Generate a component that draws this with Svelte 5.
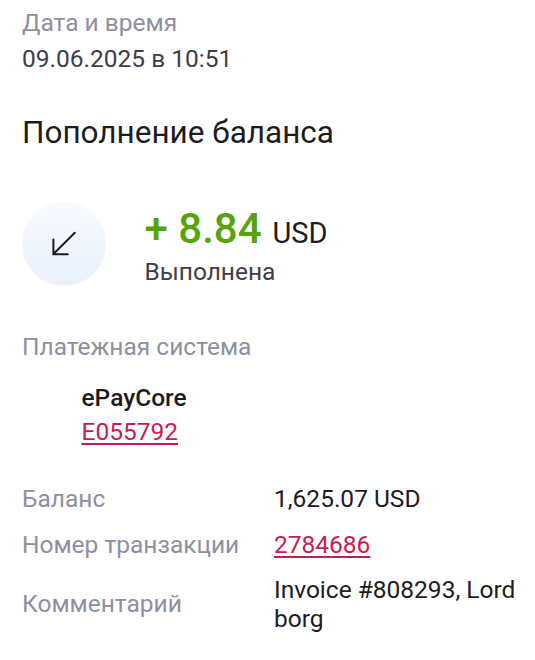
<script>
  const rows = [
    { label: 'Баланс', value: '1,625.07 USD' },
    { label: 'Номер транзакции', value: '2784686', link: true },
    { label: 'Комментарий', value: 'Invoice #808293, Lord borg' }
  ];
</script>

<main>
  <header>
    <div class="label">Дата и время</div>
    <div class="date">09.06.2025 в 10:51</div>
  </header>
  <h1>Пополнение баланса</h1>
  <section class="summary">
    <div class="icon">
      <svg width="30" height="30" viewBox="0 0 30 30" fill="none" stroke="#1c1c1f" stroke-width="2" stroke-linecap="round">
        <path d="M25.8 3.7L4.7 24.8M4.4 10.5V25.3H18.8" />
      </svg>
    </div>
    <div class="result">
      <div class="amount"><b>+ 8.84</b><span>USD</span></div>
      <div class="status">Выполнена</div>
    </div>
  </section>
  <div class="label">Платежная система</div>
  <section class="system">
    <strong>ePayCore</strong>
    <a href="#account">E055792</a>
  </section>
  <dl>
    {#each rows as row}
      <div class="row">
        <dt>{row.label}</dt>
        <dd>{#if row.link}<a href="#transaction">{row.value}</a>{:else}{row.value}{/if}</dd>
      </div>
    {/each}
  </dl>
</main>

<style>
  :global(body) { margin: 0; background: #fff; }
  main {
    box-sizing: border-box;
    width: 535px;
    height: 660px;
    padding: 8px 0 0 22px;
    overflow: hidden;
    font: 24.5px/29px Roboto, "Liberation Sans", sans-serif;
    color: #1c1c1f;
  }
  .label, dt { color: #908fa0; }
  .date { margin-top: 7px; color: #3f3e46; }
  h1 { margin: 41px 0 0; font-size: 31.5px; line-height: 37px; font-weight: 400; }
  .summary { display: flex; gap: 38.5px; margin-top: 51px; height: 84px; }
  .icon {
    display: flex;
    align-items: center;
    justify-content: center;
    width: 84px;
    height: 84px;
    border-radius: 50%;
    background: linear-gradient(#f8faff, #e9f1fb);
  }
  .result { padding-top: 2px; }
  .amount { display: flex; align-items: baseline; height: 49px; line-height: 49px; }
  .amount b { font-size: 42px; font-weight: 500; color: #56a30b; }
  .amount span { margin-left: 11px; font-size: 29px; line-height: 34px; }
  .status { margin-top: 4px; color: #3f3e46; }
  .summary + .label { margin-top: 46px; }
  .system { display: flex; flex-direction: column; align-items: flex-start; margin: 22px 0 0 59.5px; }
  .system a { margin-top: 5px; }
  strong { font-weight: 500; }
  a { color: #c81c50; text-decoration-thickness: 2px; text-underline-offset: 3px; }
  dl { margin: 30px 0 0; }
  .row {
    display: grid;
    grid-template-columns: 252px 250px;
    align-items: center;
    padding: 8px 0;
  }
  .row:first-child { padding-bottom: 9px; }
  .row:last-child dt { margin-bottom: 1px; }
  dd { margin: 0; }
</style>
